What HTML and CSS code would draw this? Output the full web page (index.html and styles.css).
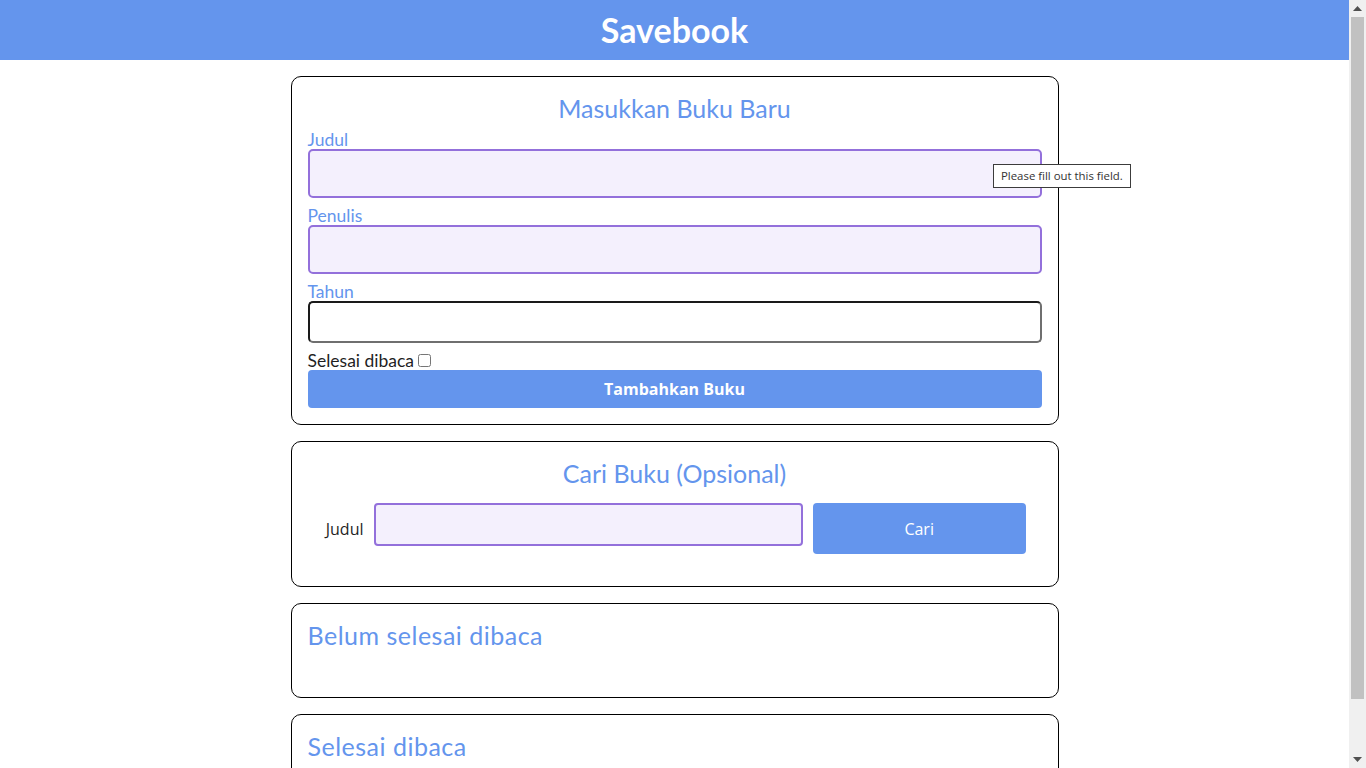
FILE: index.html
```html
<!DOCTYPE html>
<html lang="id">
<head>
<meta charset="utf-8">
<title>Savebook</title>
<link rel="stylesheet" href="styles.css">
</head>
<body>
<div class="page">
  <header class="head">
    <h1 class="brand">Savebook</h1>
  </header>
  <main class="main">
    <section class="card">
      <h2 class="card-title center">Masukkan Buku Baru</h2>
      <form class="book-form">
        <div class="field">
          <label class="label" for="judul">Judul</label>
          <input class="input invalid" id="judul" type="text">
        </div>
        <div class="field">
          <label class="label" for="penulis">Penulis</label>
          <input class="input invalid" id="penulis" type="text">
        </div>
        <div class="field">
          <label class="label" for="tahun">Tahun</label>
          <input class="input plain" id="tahun" type="text">
        </div>
        <div class="check-row">
          <label class="check-label" for="selesai">Selesai dibaca</label>
          <input class="check" id="selesai" type="checkbox">
        </div>
        <button class="btn-add" type="button">Tambahkan Buku</button>
      </form>
    </section>

    <section class="card">
      <h2 class="card-title center">Cari Buku (Opsional)</h2>
      <form class="search-form">
        <label class="search-label" for="cari">Judul</label>
        <input class="search-input" id="cari" type="text">
        <button class="btn-search" type="button">Cari</button>
      </form>
    </section>

    <section class="card">
      <h2 class="card-title wide">Belum selesai dibaca</h2>
      <div class="list"></div>
    </section>

    <section class="card">
      <h2 class="card-title wide">Selesai dibaca</h2>
      <div class="list"></div>
    </section>
  </main>
  <div class="tooltip">Please fill out this field.</div>
</div>
<div class="scrollbar" aria-hidden="true">
  <div class="sb-btn">
    <svg width="9" height="5" viewBox="0 0 9 5"><path d="M0 5 L4.5 0 L9 5 Z" fill="#505050"/></svg>
  </div>
  <div class="sb-track">
    <div class="sb-thumb"></div>
  </div>
  <div class="sb-btn">
    <svg width="9" height="5" viewBox="0 0 9 5"><path d="M0 0 L4.5 5 L9 0 Z" fill="#505050"/></svg>
  </div>
</div>
</body>
</html>
```
FILE: styles.css
```css
html, body { height: 100%; }
body {
  margin: 0;
  display: flex;
  overflow: hidden;
  font-family: "Lato", "Open Sans", sans-serif;
  color: #1f1f1f;
}
.page {
  position: relative;
  flex: 1;
  min-width: 0;
  height: 100%;
  overflow: hidden;
}
.scrollbar {
  width: 17px;
  flex: none;
  height: 100%;
  background: #f0f0f0;
  display: flex;
  flex-direction: column;
}
.sb-btn {
  height: 17px;
  display: flex;
  align-items: center;
  justify-content: center;
}
.sb-track {
  flex: 1;
  padding: 0 2px;
}
.sb-thumb {
  height: 682px;
  background: #c1c1c1;
}
.head {
  height: 60px;
  background: #6495ed;
  display: flex;
  align-items: center;
  justify-content: center;
}
.brand {
  margin: 0;
  color: #fff;
  font-size: 34px;
  font-weight: 700;
  line-height: 40px;
}
.main {
  display: flex;
  flex-direction: column;
  align-items: center;
  gap: 16px;
  padding-top: 16px;
}
.card {
  width: 768px;
  box-sizing: border-box;
  border: 1px solid #000;
  border-radius: 10px;
  padding: 16px;
}
.card-title {
  margin: 0;
  color: #6495ed;
  font-size: 25px;
  font-weight: 400;
  line-height: 30px;
}
.center { text-align: center; }
.wide { letter-spacing: 0.5px; }
.book-form { display: flex; flex-direction: column; }
.field { display: flex; flex-direction: column; margin-top: 9px; }
.field:first-child { margin-top: 8px; }
.label {
  color: #6495ed;
  font-size: 17.5px;
  line-height: 18px;
}
.input {
  box-sizing: border-box;
  width: 100%;
  border-radius: 5px;
  margin: 0;
  font: inherit;
  outline: none;
}
.invalid {
  height: 49px;
  border: 2px solid #9370db;
  background: #f4f0fd;
}
.plain {
  height: 42px;
  border: 2px solid #1a1a1a;
  border-bottom-color: #6f6f6f;
  border-right-color: #6f6f6f;
  background: #fff;
}
.check-row {
  display: flex;
  align-items: center;
  margin-top: 8px;
  height: 19px;
  font-size: 17.5px;
}
.check-label { color: #1f1f1f; }
.check { margin: 0 0 0 4px; width: 13px; height: 13px; }
.btn-add {
  height: 38px;
  border: none;
  border-radius: 4px;
  background: #6495ed;
  color: #fff;
  font-family: "Open Sans", sans-serif;
  font-weight: 700;
  font-size: 16px;
}
.search-form {
  display: flex;
  align-items: center;
  gap: 10px;
  padding: 15px 16px 16px;
}
.search-label {
  font-family: "Open Sans", sans-serif;
  font-size: 16px;
  color: #1f1f1f;
  width: 40px;
  text-align: right;
}
.search-input {
  flex: 2 1 0;
  min-width: 0;
  padding: 0;
  align-self: flex-start;
  height: 43px;
  box-sizing: border-box;
  border: 2px solid #9370db;
  border-radius: 4px;
  background: #f4f0fd;
  margin: 0;
  outline: none;
}
.btn-search {
  flex: 1 1 0;
  min-width: 0;
  padding: 0;
  height: 51px;
  border: none;
  border-radius: 4px;
  background: #6495ed;
  color: #fff;
  font-family: "Open Sans", sans-serif;
  font-size: 16px;
}
.list { height: 31px; }
.tooltip {
  position: absolute;
  left: 993px;
  top: 164px;
  box-sizing: border-box;
  height: 24px;
  padding: 0 7px;
  border: 1px solid #3c3c3c;
  background: #fff;
  color: #333;
  font-family: "Open Sans", sans-serif;
  font-size: 11.4px;
  line-height: 22px;
}
```
